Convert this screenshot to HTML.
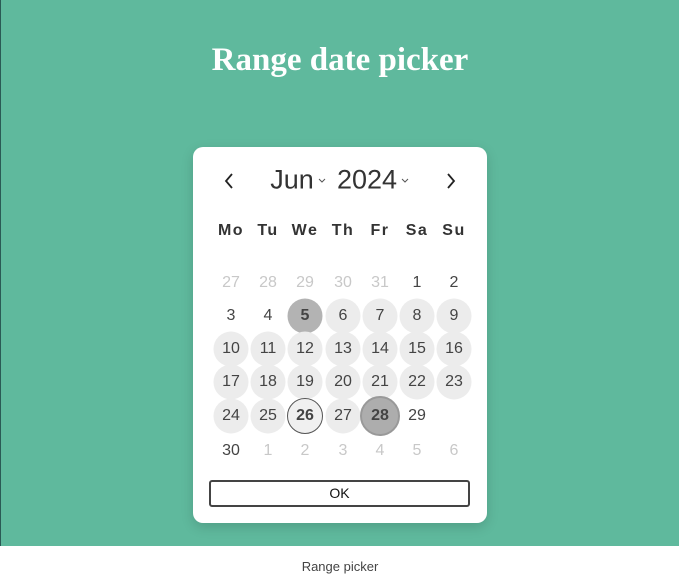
<!DOCTYPE html>
<html><head><style>
body{margin:0;width:680px;height:576px;overflow:hidden;background:#fff;font-family:"Liberation Sans",sans-serif;}
.bg{position:absolute;left:0;top:0;width:679px;height:546px;background:#5fb99d;border-left:1px solid #2a5a55;box-sizing:border-box;}
h1{position:absolute;left:0;width:680px;top:42px;margin:0;text-align:center;color:#fff;font-family:"Liberation Serif",serif;font-weight:bold;font-size:33px;}
.card{position:absolute;left:193px;top:147px;width:294px;height:376px;background:#fff;border-radius:10px;box-shadow:0 4px 12px rgba(0,0,0,.15);}
.t{position:absolute;transform:translate(-50%,-50%);white-space:nowrap;color:#444;}
.c{position:absolute;width:35px;height:35px;border-radius:50%;transform:translate(-50%,-50%);background:#ececec;}
.ok{position:absolute;left:16px;top:333px;width:257px;height:23px;border:2px solid #444;border-radius:3px;text-align:center;line-height:23px;font-size:14px;color:#111;}
.cap{position:absolute;top:559px;left:0;width:680px;text-align:center;font-size:13px;color:#444;}
svg{position:absolute;}
</style></head><body>
<div class="bg"></div>
<h1>Range date picker</h1>
<div class="card" id="card">
<svg style="left:30px;top:25px" width="12" height="18"><path d="M9 2 L3 9 L9 16" fill="none" stroke="#222" stroke-width="1.8"/></svg>
<svg style="left:252px;top:25px" width="12" height="18"><path d="M3 2 L9 9 L3 16" fill="none" stroke="#222" stroke-width="1.8"/></svg>
<svg style="left:125px;top:31px" width="8" height="6"><path d="M1 1 L4 4 L7 1" fill="none" stroke="#555" stroke-width="1"/></svg>
<svg style="left:208px;top:31px" width="8" height="6"><path d="M1 1 L4 4 L7 1" fill="none" stroke="#555" stroke-width="1"/></svg>
<div class="ok">OK</div>
</div>
<div class="cap">Range picker</div>
<script>
var card=document.getElementById('card');
function T(x,y,s,st){var d=document.createElement('div');d.className='t';d.style.left=(x-193)+'px';d.style.top=(y-147)+'px';d.textContent=s;if(st)d.style.cssText+=st;card.appendChild(d);}
function C(x,y,st){var d=document.createElement('div');d.className='c';d.style.left=(x-193)+'px';d.style.top=(y-147)+'px';if(st)d.style.cssText+=st;card.appendChild(d);}
T(292,180,'Jun','font-size:27px;color:#333;');
T(367,180,'2024','font-size:27px;color:#333;');
var cx=[231,268,305,343,380,417,454];
['Mo','Tu','We','Th','Fr','Sa','Su'].forEach(function(s,i){T(cx[i],231,s,'font-size:16px;font-weight:bold;letter-spacing:1.5px;color:#333;');});
var rows=[283,316,349,382,416,451];
var days=[[27,28,29,30,31,1,2],[3,4,5,6,7,8,9],[10,11,12,13,14,15,16],[17,18,19,20,21,22,23],[24,25,26,27,28,29,''],[30,1,2,3,4,5,6]];
days.forEach(function(r,ri){r.forEach(function(d,ci){
 if(d==='')return;
 var x=cx[ci],y=rows[ri],st='font-size:16px;';
 var grey=(ri==0&&ci<5)||(ri==5&&ci>0);
 var inr=(ri==1&&ci>=2)||ri==2||ri==3||(ri==4&&ci<=4);
 if(inr){
  if(ri==1&&ci==2)C(x,y,'background:#b3b3b3;');
  else if(ri==4&&ci==2)C(x,y,'background:#f0f0f0;border:1px solid #555;width:36px;height:36px;box-sizing:border-box;');
  else if(ri==4&&ci==4)C(x,y,'background:#adadad;border:2px solid #999;width:40px;height:40px;box-sizing:border-box;');
  else C(x,y);
 }
 if(grey)st+='color:#c8c8c8;';
 if((ri==1&&ci==2)||(ri==4&&(ci==2||ci==4)))st+='font-weight:bold;';
 T(x,y,String(d),st);
});});
</script>
</body></html>
